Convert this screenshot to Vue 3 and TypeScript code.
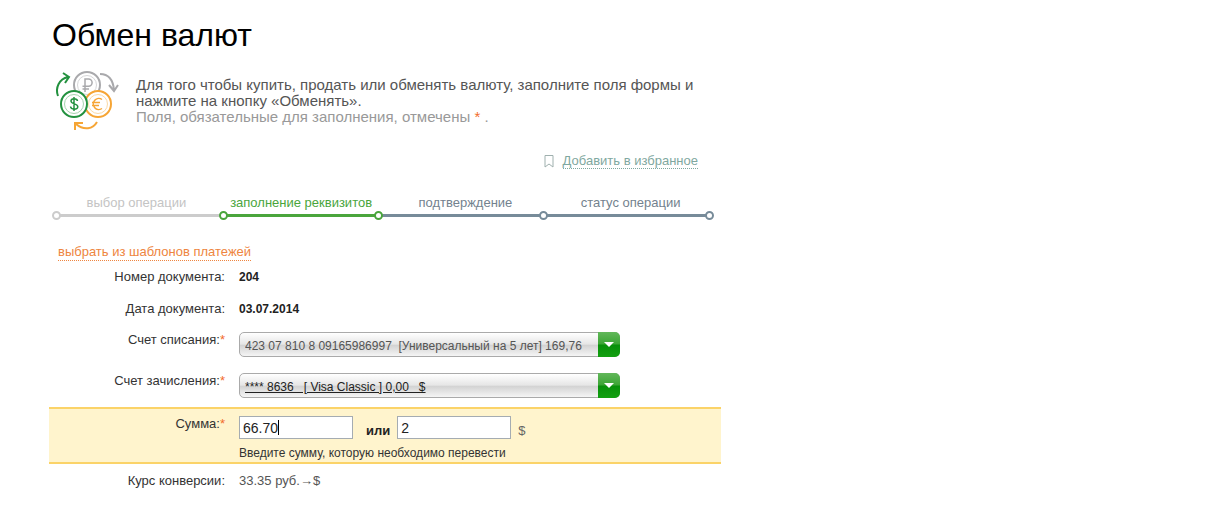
<script setup lang="ts">
import { ref } from 'vue'

interface Step {
  title: string
  state: 'past' | 'current' | 'next'
}

const steps: Step[] = [
  { title: 'выбор операции', state: 'past' },
  { title: 'заполнение реквизитов', state: 'current' },
  { title: 'подтверждение', state: 'next' },
  { title: 'статус операции', state: 'next' },
]

const fromAccounts: string[] = ['423 07 810 8 09165986997 \u00a0[Универсальный на 5 лет] 169,76']
const toAccounts: string[] = ['**** 8636 \u00a0\u00a0[ Visa Classic ] 0,00 \u00a0\u00a0$']

const fromAccount = ref(fromAccounts[0])
const toAccount = ref(toAccounts[0])
const sellAmount = ref('66.70')
const buyAmount = ref('2')
</script>

<template>
  <main class="page">
    <h1 class="title">Обмен валют</h1>

    <header class="intro">
      <svg class="coins" viewBox="0 0 66 62" fill="none" aria-hidden="true">
        <g stroke="#a9a9ac">
          <circle cx="33" cy="15" r="13" stroke-width="2" />
          <circle cx="33" cy="15" r="9.5" stroke="#d6d6d8" />
          <path d="M31 22V9h3.500a3.600 3.600 0 0 1 0 7.200H28.500M28.500 19H35" stroke-width="1.500" />
          <path d="M46 4c8 0 13 5 14 16M55 15l5 6 4-6" stroke-width="2" />
        </g>
        <g stroke="#f6a535">
          <circle cx="44" cy="34" r="13" fill="#fff" stroke-width="2" />
          <circle cx="44" cy="34" r="9.500" stroke="#fbd9a5" />
          <path d="M48 29.500a5.500 5.500 0 1 0 0 9M38 32.500h8M38 35.500h7" stroke-width="1.500" />
          <path d="M43 52c-4 7-13 9-21 2M21 60l0-7 8 0" stroke-width="2" />
        </g>
        <g stroke="#23913f">
          <circle cx="20" cy="34" r="13" fill="#fff" stroke-width="2" />
          <circle cx="20" cy="34" r="9.500" stroke="#a5d3ae" />
          <path d="M23.500 31c-.5-3-6.500-3-6.500 0 0 3.500 6.800 2.200 6.800 5.800 0 3.200-6.800 3.200-7.300-.3M20 27v14" stroke-width="1.500" />
          <path d="M4 26C1 18 5 9 14 7M9 3l6 4-4 6" stroke-width="2" />
        </g>
      </svg>
      <div class="intro-text">
        <p>Для того чтобы купить, продать или обменять валюту, заполните поля формы и нажмите на кнопку «Обменять».</p>
        <p class="muted">Поля, обязательные для заполнения, отмечены <span class="star">*</span> .</p>
      </div>
    </header>

    <div class="favorite">
      <svg class="bookmark" viewBox="0 0 10 13" fill="none" stroke="#9fb0ae" aria-hidden="true">
        <path d="M1 .5h8v11.500L5 9 1 12z" />
      </svg>
      <a class="dotted" href="#favorite">Добавить в избранное</a>
    </div>

    <ol class="steps">
      <li v-for="step in steps" :key="step.title" class="step" :class="step.state">{{ step.title }}</li>
    </ol>

    <form class="form" @submit.prevent>
      <a class="dotted templates" href="#templates">выбрать из шаблонов платежей</a>

      <div class="row">
        <span class="label">Номер документа:</span>
        <strong class="value">204</strong>
      </div>
      <div class="row">
        <span class="label">Дата документа:</span>
        <strong class="value">03.07.2014</strong>
      </div>
      <div class="row account">
        <label class="label" for="from">Счет списания:<span class="star">*</span></label>
        <div class="picker">
          <select id="from" v-model="fromAccount">
            <option v-for="item in fromAccounts" :key="item">{{ item }}</option>
          </select>
          <span class="arrow"></span>
        </div>
      </div>
      <div class="row account">
        <label class="label" for="to">Счет зачисления:<span class="star">*</span></label>
        <div class="picker">
          <select id="to" v-model="toAccount" class="underlined">
            <option v-for="item in toAccounts" :key="item">{{ item }}</option>
          </select>
          <span class="arrow"></span>
        </div>
      </div>
      <div class="row sum">
        <label class="label" for="sell">Сумма:<span class="star">*</span></label>
        <div>
          <div class="amounts">
            <span class="active-field">
              <input id="sell" v-model="sellAmount" type="text" />
              <span class="caret"></span>
            </span>
            <label class="or" for="buy">или</label>
            <input id="buy" v-model="buyAmount" type="text" />
            <span class="currency">$</span>
          </div>
          <p class="hint">Введите сумму, которую необходимо перевести</p>
        </div>
      </div>
      <div class="row rate">
        <span class="label">Курс конверсии:</span>
        <span class="value">33.35 руб.→$</span>
      </div>
    </form>
  </main>
</template>

<style>
body {
  background: #fff;
}
</style>

<style scoped>
.page {
  max-width: 672px;
  padding: 15px 48px 24px 49px;
  font-family: "Liberation Sans", Arial, sans-serif;
  font-size: 13px;
  line-height: 16px;
  color: #333;
}
p, h1, ol {
  margin: 0;
  padding: 0;
}
.title {
  padding-left: 3px;
  font-size: 32px;
  line-height: 40px;
  font-weight: 400;
  color: #000;
}
.intro {
  display: flex;
  align-items: center;
  gap: 16px;
  margin-top: 15px;
  padding: 0 20px 0 5px;
}
.coins {
  flex: none;
  width: 66px;
  height: 62px;
}
.intro-text {
  font-size: 15px;
  color: #555;
}
.muted {
  color: #999;
}
.star {
  color: #f26c2a;
}
.dotted {
  text-decoration: none;
  border-bottom: 1px dotted currentColor;
}
.favorite {
  display: flex;
  justify-content: flex-end;
  align-items: center;
  gap: 9px;
  margin-top: 21px;
  padding-right: 23px;
}
.favorite .dotted {
  line-height: 15px;
  color: #7fa8a0;
}
.bookmark {
  width: 10px;
  height: 13px;
}
.steps {
  display: grid;
  grid-template-columns: 167fr 155fr 166fr 165fr;
  margin-top: 26px;
  padding: 0 12px 0 8px;
  list-style: none;
}
.step {
  --tone: #778b99;
  position: relative;
  padding: 0 0 3px 8px;
  border-bottom: 3px solid var(--tone);
  text-align: center;
  color: #73828e;
}
.step.past {
  --tone: #ccc;
  padding: 0 8px 3px 0;
  color: #c4c4c4;
}
.step.current {
  --tone: #4aa53c;
  padding: 0 0 3px;
  color: #4aa53c;
}
.step::before,
.step:last-child::after {
  content: "";
  position: absolute;
  z-index: 1;
  bottom: -6px;
  left: -5px;
  box-sizing: border-box;
  width: 9px;
  height: 9px;
  border: 2px solid var(--tone);
  border-radius: 50%;
  background: #fff;
}
.step:last-child::after {
  left: auto;
  right: -5px;
}
.step.current + .step::before {
  border-color: #4aa53c;
}
.form {
  margin-top: 27px;
}
.templates {
  display: inline-block;
  margin-left: 9px;
  color: #ee8540;
}
.row {
  display: grid;
  grid-template-columns: 176px 1fr;
  column-gap: 14px;
  padding: 8px 0;
}
.label {
  text-align: right;
}
.value {
  color: #555;
}
strong.value {
  font-size: 12px;
  color: #222;
}
.account {
  padding: 7px 0 9px;
}
.picker {
  position: relative;
  width: 100%;
  max-width: 381px;
}
.picker select {
  display: block;
  appearance: none;
  box-sizing: border-box;
  width: 100%;
  height: 25px;
  padding: 2px 25px 0 5px;
  border: 1px solid #aaa;
  border-radius: 5px;
  background: linear-gradient(#fff, #e6e6e6 48%, #d3d3d3 54%, #f5f5f5);
  font: 12px "Liberation Sans", Arial, sans-serif;
  color: #555;
}
.picker select.underlined {
  color: #222;
  text-decoration: underline;
}
.arrow {
  position: absolute;
  top: 0;
  right: 0;
  width: 22px;
  height: 25px;
  border-radius: 0 5px 5px 0;
  background: linear-gradient(#62b75a, #3ca535 48%, #08900a 52%, #12a010);
  pointer-events: none;
}
.arrow::after {
  content: "";
  position: absolute;
  top: 10px;
  left: 6px;
  border: 5px solid transparent;
  border-top-color: #fff;
  border-bottom: 0;
}
.sum {
  padding: 7px 0 1px;
  border: solid #fbd368;
  border-width: 2px 0;
  background: #fff4cd;
}
.amounts {
  display: flex;
  align-items: center;
}
.amounts input {
  box-sizing: border-box;
  width: 114px;
  height: 23px;
  padding: 0 3px;
  border: 1px solid #a5acb2;
  background: #fff;
  font: 14px "Liberation Sans", Arial, sans-serif;
  color: #222;
}
.active-field {
  position: relative;
  display: flex;
}
.caret {
  position: absolute;
  top: 4px;
  left: 39px;
  width: 1px;
  height: 15px;
  background: #000;
}
.or {
  margin: 6px 7px 0 13px;
  font-weight: 700;
  color: #222;
}
.currency {
  margin: 6px 0 0 7px;
  color: #666;
}
.hint {
  margin-top: 6px;
  font-size: 12px;
}
.rate {
  padding-top: 9px;
}
</style>
